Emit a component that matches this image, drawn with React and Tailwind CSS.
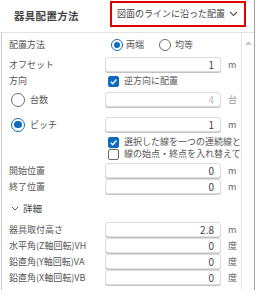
const font = { fontFamily: '"Noto Sans CJK JP", "Noto Sans", sans-serif' };

function Radio({ checked, size = "w-[12px] h-[12px]" }) {
  return (
    <span
      className={`${size} shrink-0 rounded-full border flex items-center justify-center bg-white ${
        checked ? "border-[#0f6cbd]" : "border-[#6b6b6b]"
      }`}
    >
      {checked && <span className="w-[60%] h-[60%] rounded-full bg-[#0f6cbd]" />}
    </span>
  );
}

function Check({ checked }) {
  return (
    <span
      className={`w-[11px] h-[11px] shrink-0 rounded-[2px] border flex items-center justify-center ${
        checked ? "bg-[#0f6cbd] border-[#0f6cbd]" : "bg-white border-[#6b6b6b]"
      }`}
    >
      {checked && (
        <svg width="9" height="9" viewBox="0 0 10 10">
          <path d="M2 5.2 L4.2 7.4 L8.2 2.8" fill="none" stroke="white" strokeWidth="1.5" />
        </svg>
      )}
    </span>
  );
}

function Field({ value, unit, disabled }) {
  return (
    <div className="flex items-center">
      <div className="w-[116px] h-[15px] rounded-[3px] border border-[#dcdcdc] bg-white shadow-[0_1px_0_#c4c4c4] flex items-center justify-end pr-[6px]">
        <span className={`text-[10px] leading-none ${disabled ? "text-[#c0c0c0]" : "text-[#444]"}`}>{value}</span>
      </div>
      <span className={`ml-[7px] text-[9px] ${disabled ? "text-[#999]" : "text-[#666]"}`}>{unit}</span>
    </div>
  );
}

function Row({ label, children, className = "" }) {
  return (
    <div className={`flex items-center ${className}`}>
      <div className="w-[96px] shrink-0 text-[9px] text-[#555] whitespace-nowrap">{label}</div>
      {children}
    </div>
  );
}

export default function App() {
  return (
    <div className="w-[259px] h-[300px] bg-white text-[#333]" style={font}>
      <div className="w-[255px] h-[290px] border-r border-[#a0a0a0] flex flex-col">
        {/* header */}
        <div className="h-[33px] shrink-0 border-b border-[#e3e3e3] flex items-center pl-[14px] pr-[8px]">
          <span className="text-[10.5px] font-bold text-[#444] tracking-[0.3px]">器具配置方法</span>
          <div className="ml-auto mb-[4px] w-[136px] h-[26px] border-2 border-[#e00000] flex items-center pl-[5px] pr-[6px]">
            <span className="text-[9px] text-[#444] whitespace-nowrap">図面のラインに沿った配置</span>
            <svg className="ml-auto" width="9" height="6" viewBox="0 0 9 6">
              <path d="M1 1 L4.5 4.5 L8 1" fill="none" stroke="#555" strokeWidth="1.1" />
            </svg>
          </div>
        </div>

        {/* body */}
        <div className="flex-1 flex border-l border-[#c8c8c8] ml-[1px]">
          <div className="w-[240px] overflow-hidden pl-[7px] flex flex-col">
            <Row label="配置方法" className="h-[23px]">
              <div className="flex items-center pl-[6px]">
                <Radio checked />
                <span className="ml-[3px] text-[9px] text-[#555]">両端</span>
                <span className="ml-[15px]"><Radio /></span>
                <span className="ml-[4px] text-[9px] text-[#555]">均等</span>
              </div>
            </Row>
            <Row label="オフセット" className="h-[15px] mt-[1px]">
              <Field value="1" unit="m" />
            </Row>
            <Row label="方向" className="h-[16px] mt-[1px]">
              <div className="flex items-center pl-[3px]">
                <Check checked />
                <span className="ml-[5px] text-[9px] text-[#555]">逆方向に配置</span>
              </div>
            </Row>
            <div className="flex items-center h-[17px] mt-[2px]">
              <div className="w-[96px] shrink-0 flex items-center pl-[2px]">
                <Radio size="w-[14px] h-[14px]" />
                <span className="ml-[5px] text-[9px] text-[#555]">台数</span>
              </div>
              <Field value="4" unit="台" disabled />
            </div>
            <div className="flex items-center h-[17px] mt-[8px]">
              <div className="w-[96px] shrink-0 flex items-center pl-[2px]">
                <Radio checked size="w-[14px] h-[14px]" />
                <span className="ml-[5px] text-[9px] text-[#555]">ピッチ</span>
              </div>
              <Field value="1" unit="m" />
            </div>
            <div className="flex flex-col pl-[99px] mt-[3px]">
              <div className="flex items-center h-[12px]">
                <Check checked />
                <span className="ml-[5px] text-[9px] text-[#555] whitespace-nowrap">選択した線を一つの連続線として配置</span>
              </div>
              <div className="flex items-center h-[12px]">
                <Check />
                <span className="ml-[5px] text-[9px] text-[#555] whitespace-nowrap">線の始点・終点を入れ替えて配置</span>
              </div>
            </div>
            <Row label="開始位置" className="h-[15px] mt-[3px]">
              <Field value="0" unit="m" />
            </Row>
            <Row label="終了位置" className="h-[15px] mt-[1px]">
              <Field value="0" unit="m" />
            </Row>
            <div className="flex items-center h-[16px] mt-[6px] pl-[2px]">
              <svg width="8" height="5" viewBox="0 0 8 5">
                <path d="M0.8 0.8 L4 4 L7.2 0.8" fill="none" stroke="#555" strokeWidth="1" />
              </svg>
              <span className="ml-[4px] text-[9.5px] text-[#444]">詳細</span>
            </div>
            <Row label="器具取付高さ" className="h-[15px] mt-[6px]">
              <Field value="2.8" unit="m" />
            </Row>
            <Row label="水平角(Z軸回転)VH" className="h-[15px] mt-[1px]">
              <Field value="0" unit="度" />
            </Row>
            <Row label="鉛直角(Y軸回転)VA" className="h-[15px] mt-[1px]">
              <Field value="0" unit="度" />
            </Row>
            <Row label="鉛直角(X軸回転)VB" className="h-[15px] mt-[1px]">
              <Field value="0" unit="度" />
            </Row>
          </div>
          <div className="w-[13px] border-l border-[#e6e6e6] flex justify-center pt-[8px]">
            <svg width="7" height="4" viewBox="0 0 7 4">
              <path d="M0 4 L3.5 0 L7 4 Z" fill="#c8c8c8" />
            </svg>
          </div>
        </div>
      </div>
    </div>
  );
}
